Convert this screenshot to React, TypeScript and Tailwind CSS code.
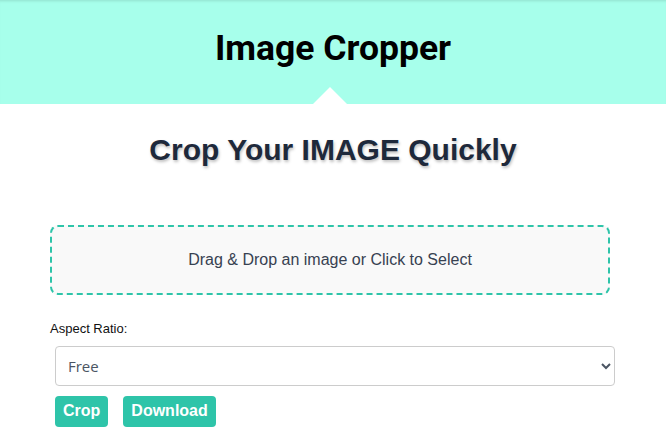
import React from 'react';

// Simple image cropper landing screen
export default function App() {
  return (
    <div className="min-h-screen bg-white font-['Liberation_Sans',Arial,sans-serif]">
      <header className="relative h-[104px] bg-[#a7ffeb] shadow-[inset_0_3px_3px_-2px_rgba(0,0,0,0.12)] flex items-center justify-center pb-[6px]">
        <h1 className="font-['Roboto',sans-serif] text-[35.5px] font-bold text-black leading-none">Image Cropper</h1>
        <div className="absolute bottom-0 left-[313px] w-0 h-0 border-l-[17px] border-r-[17px] border-b-[17px] border-l-transparent border-r-transparent border-b-white" />
      </header>

      <main className="px-[50px]">
        <h2 className="mt-[28px] text-center text-[30px] font-bold text-[#1e293b] leading-[36px] [text-shadow:1px_2px_3px_rgba(0,0,0,0.25)]">
          Crop Your IMAGE Quickly
        </h2>

        <div className="mt-[57px] w-[560px] h-[70px] rounded-lg border-2 border-dashed border-[#2ec4a9] bg-[#f9f9f9] flex items-center justify-center">
          <span className="text-[16px] text-[#374151]">Drag &amp; Drop an image or Click to Select</span>
        </div>

        <div className="mt-[24px] text-[13px] text-[#111]">Aspect Ratio:</div>

        <select className="mt-[7px] ml-[5px] w-[560px] h-[40px] rounded border border-[#ccc] bg-white px-[8px] text-[15px] text-[#4b5563] font-['Open_Sans',sans-serif]">
          <option>Free</option>
          <option>1:1</option>
          <option>16:9</option>
          <option>4:3</option>
        </select>

        <div className="mt-[10px] ml-[5px] flex gap-[15px]">
          <button className="h-[31px] px-[8px] rounded-[4px] bg-[#2ec4a9] text-white font-bold text-[16px]">Crop</button>
          <button className="h-[31px] px-[8px] rounded-[4px] bg-[#2ec4a9] text-white font-bold text-[16px]">Download</button>
        </div>
      </main>
    </div>
  );
}
